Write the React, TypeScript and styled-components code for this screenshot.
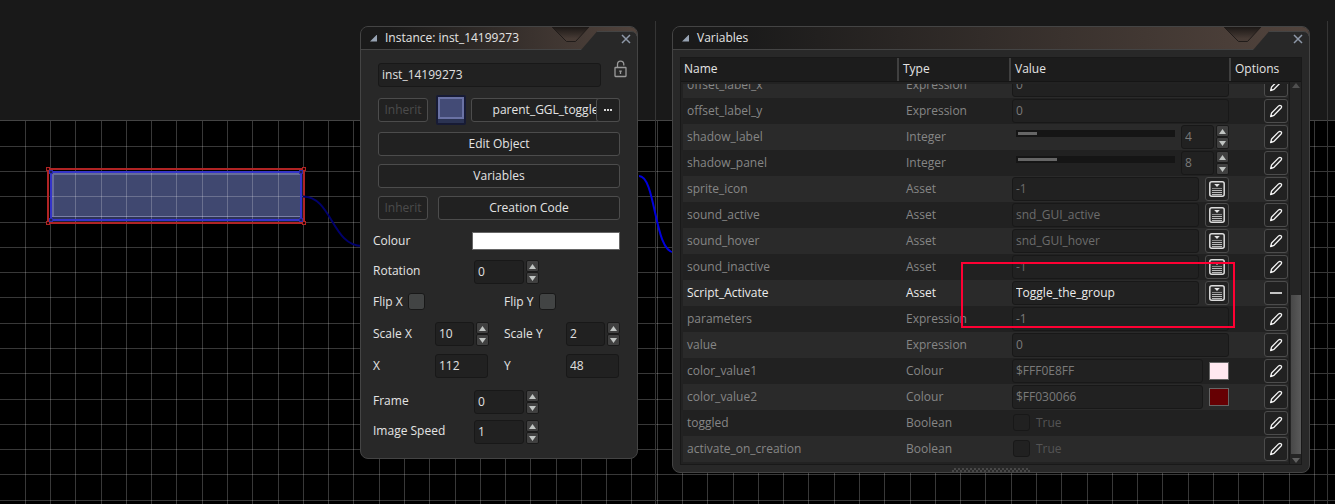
import React, { useLayoutEffect, useRef } from 'react';
import styled, { createGlobalStyle, css } from 'styled-components';

const GlobalStyle = createGlobalStyle`
  * { box-sizing: border-box; }
  body {
    margin: 0;
    background: #000;
    color: #e4e4e4;
    font: 12px/16px "Open Sans", sans-serif;
  }
  button, input {
    margin: 0;
    font: inherit;
    color: inherit;
  }
`;

/* ---------- room canvas ---------- */

const Workspace = styled.main`
  position: relative;
  min-height: 100vh;
  overflow: hidden;
  background: #000;
`;

const Canvas = styled.svg`
  position: absolute;
  inset: 0;
  width: 100%;
  height: 100%;
  display: block;
`;

const CELL = 25.28;
const columns = Array.from({ length: 110 }, (_, i) => Math.floor(25.25 + i * CELL));
const lines = Array.from({ length: 60 }, (_, i) => Math.floor(120.95 + i * CELL));

const handles = (x1: number, y1: number, x2: number, y2: number) => [
  [x1, y1],
  [x2, y1],
  [x1, y2],
  [x2, y2],
];

function RoomCanvas() {
  return (
    <Canvas aria-hidden="true">
      <rect x="0" y="0" width="100%" height="120" fill="#191919" />
      <rect x="50" y="171" width="253" height="51" fill="#1b1f38" />
      <rect x="52" y="173" width="249" height="46" fill="#2d3358" />
      <rect x="53" y="174" width="248" height="42" fill="#404870" />
      <path d="M53 217V174H301V217" fill="none" stroke="#666c99" strokeWidth="2" />
      <path d="M52 216.5H301" stroke="#7a80a6" />
      <g fill="#fff" fillOpacity="0.22">
        {columns.map((x) => (
          <rect key={x} x={x} y="121" width="1" height="100%" />
        ))}
        {lines.map((y) => (
          <rect key={y} x="0" y={y} width="100%" height="1" />
        ))}
      </g>
      <rect x="0" y="120" width="100%" height="1" fill="#444" />
      <rect x="655" y="21" width="1" height="100%" fill="#353535" />
      <rect x="1327" y="21" width="1" height="100%" fill="#353535" />
      <g fill="none">
        <rect x="48" y="169" width="256" height="54" stroke="#b02424" strokeWidth="2" />
        <rect x="51" y="172" width="250" height="48" stroke="#3434c8" strokeWidth="2" />
        {handles(46, 167, 302, 221).map(([x, y]) => (
          <rect key={`r${x}-${y}`} x={x + 0.5} y={y + 0.5} width="3" height="3" fill="#200" stroke="#b02424" />
        ))}
        {handles(49, 170, 299, 218).map(([x, y]) => (
          <rect key={`b${x}-${y}`} x={x + 0.5} y={y + 0.5} width="3" height="3" fill="#1b1f50" stroke="#2c2ca8" />
        ))}
        <path d="M303 196.500C332 196.500 332 246 362 246" stroke="#00006c" strokeWidth="2" />
        <path d="M639 176C656 176 654 252 674 252.500" stroke="#0000dc" strokeWidth="2" />
      </g>
    </Canvas>
  );
}

/* ---------- window chrome ---------- */

const Window = styled.section<{ $left: number; $width?: number; $right?: number }>`
  position: absolute;
  top: 26px;
  left: ${(p) => p.$left}px;
  ${(p) => (p.$width ? css`width: ${p.$width}px;` : css`right: ${p.$right}px;`)}
  background: #282828;
  border: 1px solid #444;
  border-radius: 8px;
`;

const TitleBar = styled.header`
  display: flex;
  align-items: center;
  height: 23px;
  padding-left: 9px;
  border-bottom: 1px solid #444;
  border-radius: 7px 7px 0 0;
  background: linear-gradient(90deg, #1a1a1a 10%, #52443d 100%);
`;

const Collapse = styled.button`
  width: 7px;
  height: 7px;
  padding: 0;
  border: 0;
  background: #97a3b3;
  clip-path: polygon(100% 0, 100% 100%, 0 100%);
`;

const Title = styled.h2`
  flex: 1;
  margin: 0 0 0 8px;
  font-size: 12px;
  font-weight: 400;
  line-height: 16px;
  white-space: nowrap;
`;

const TitleEnd = styled.div`
  position: relative;
  width: 87px;
  height: 23px;
  margin-top: 1px;
`;

const TitleArt = styled.svg`
  display: block;
`;

const Close = styled.button`
  position: absolute;
  top: 6px;
  right: 5px;
  display: grid;
  place-items: center;
  width: 12px;
  height: 12px;
  padding: 0;
  border: 0;
  background: none;
`;

function TitleRow({ id, children }: { id: string; children: React.ReactNode }) {
  return (
    <TitleBar>
      <Collapse aria-label="Collapse" />
      <Title>{children}</Title>
      <TitleEnd>
        <TitleArt width="87" height="23" viewBox="0 0 87 23" aria-hidden="true">
          <defs>
            <linearGradient id={id} x1="0" y1="0" x2="0" y2="1">
              <stop offset="0" stopColor="#1c1816" />
              <stop offset="0.8" stopColor="#473b35" />
            </linearGradient>
          </defs>
          <path d="M2 0L16.500 14.500H25.500L39 0Z" fill={`url(#${id})`} />
          <path d="M2 0L16.500 14.500H25.500L39 0" fill="none" stroke="#211c1a" />
          <path d="M31 23L47 4.500H81Q86.500 4.500 87 10V23Z" fill="#282828" />
          <path d="M47 4.500H81Q86 4.500 87 9" fill="none" stroke="#444" />
        </TitleArt>
        <Close aria-label="Close">
          <svg width="10" height="10" viewBox="0 0 10 10" fill="none" stroke="#8e98a8" strokeWidth="1.500">
            <path d="M1 1L9 9M9 1L1 9" />
          </svg>
        </Close>
      </TitleEnd>
    </TitleBar>
  );
}

/* ---------- shared controls ---------- */

const TextBox = styled.input<{ $w?: number; $tone?: string }>`
  ${(p) => (p.$w ? css`flex: none; width: ${p.$w}px;` : css`flex: 1; min-width: 0;`)}
  height: 24px;
  padding: 0 3px 1px;
  border: 1px solid #181818;
  border-radius: 3px;
  background: #212121;
  color: ${(p) => p.$tone ?? '#e0e0e0'};
  outline: none;
`;

const PushButton = styled.button<{ $w?: number }>`
  ${(p) => (p.$w ? css`flex: none; width: ${p.$w}px;` : css`flex: 1; min-width: 0;`)}
  display: flex;
  align-items: center;
  justify-content: center;
  height: 24px;
  padding: 0;
  border: 1px solid #4c4c4c;
  border-radius: 3px;
  background: #212121;
  white-space: nowrap;
  &:disabled { color: #4c4c4c; }
`;

const Stepper = styled.span`
  display: flex;
  flex-direction: column;
  flex: none;
  width: 13px;
  margin-left: 2px;
`;

const StepButton = styled.button`
  display: grid;
  place-items: center;
  height: 12px;
  padding: 0;
  border: 1px solid #1a1a1a;
  border-radius: 2px;
  background: #404040;
`;

function Steps({ of }: { of: string }) {
  return (
    <Stepper>
      <StepButton aria-label={`Increase ${of}`}>
        <svg width="7" height="5" viewBox="0 0 7 5"><path d="M3.500 0L7 5H0Z" fill="#c0c4c2" /></svg>
      </StepButton>
      <StepButton aria-label={`Decrease ${of}`}>
        <svg width="7" height="5" viewBox="0 0 7 5"><path d="M0 0H7L3.500 5Z" fill="#c0c4c2" /></svg>
      </StepButton>
    </Stepper>
  );
}

const Tick = styled.input<{ $dim?: boolean }>`
  appearance: none;
  flex: none;
  width: 17px;
  height: 17px;
  border: 1px solid #181818;
  border-radius: 3px;
  background: ${(p) => (p.$dim ? '#212121' : '#424444')};
`;

const ColourWell = styled.input<{ $w?: number }>`
  appearance: none;
  ${(p) => (p.$w ? css`flex: none; width: ${p.$w}px;` : css`flex: 1;`)}
  height: 18px;
  padding: 0;
  border: 1px solid #666;
  background: none;
  &::-webkit-color-swatch-wrapper { padding: 0; }
  &::-webkit-color-swatch { border: 0; border-radius: 0; }
`;

/* ---------- instance window ---------- */

const Actions = styled.div`
  padding: 13px 17px 12px;
`;

const Fields = styled.div`
  padding: 0 17px 14px 12px;
`;

const Row = styled.div<{ $before?: number }>`
  display: flex;
  align-items: center;
  margin-top: ${(p) => p.$before ?? 0}px;
`;

const Half = styled.div`
  display: flex;
  align-items: center;
  width: 131px;
  flex: none;
`;

const Label = styled.label<{ $w?: number; $raised?: boolean }>`
  flex: none;
  padding-bottom: ${(p) => (p.$raised ? 3 : 0)}px;
  ${(p) => p.$w && css`width: ${p.$w}px;`}
`;

const LockButton = styled.button`
  align-self: flex-start;
  margin: -3px -8px 0 12px;
  padding: 0;
  border: 0;
  background: none;
  svg { display: block; }
`;

const Sprite = styled.svg`
  flex: none;
  margin: -3px 5px -3px 8px;
`;

const ObjectPicker = styled.div`
  position: relative;
  display: flex;
  flex: 1;
`;

const MoreButton = styled(PushButton)`
  position: absolute;
  top: 0;
  right: 0;
  width: 24px;
`;

const Spacer = styled.span<{ $w: number }>`
  flex: none;
  width: ${(p) => p.$w}px;
`;

interface StepFieldProps { id: string; label: string; labelWidth: number; width: number; value: string; raised?: boolean }

function StepField({ id, label, labelWidth, width, value, raised }: StepFieldProps) {
  return (
    <>
      <Label htmlFor={id} $w={labelWidth} $raised={raised}>{label}</Label>
      <TextBox id={id} $w={width} defaultValue={value} />
      <Steps of={label} />
    </>
  );
}

function InstanceWindow() {
  return (
    <Window $left={360} $width={278} aria-label="Instance">
      <TitleRow id="notch-instance">Instance: inst_14199273</TitleRow>
      <Actions>
        <Row>
          <TextBox $w={223} aria-label="Instance name" defaultValue="inst_14199273" />
          <LockButton aria-label="Lock instance">
            <svg width="15" height="18" viewBox="0 0 15 18" fill="none" stroke="#9a9a9a" strokeWidth="1.300">
              <path d="M4.500 7.500V4.500Q4.500 1.200 7.500 1.200Q10.800 1.200 10.800 4.500V5.500" />
              <rect x="2" y="7.500" width="11" height="9" rx="0.500" />
              <path d="M7.500 10.500V14M6.200 11.200H8.800" />
            </svg>
          </LockButton>
        </Row>
        <Row $before={11}>
          <PushButton $w={50} disabled>Inherit</PushButton>
          <Sprite width="30" height="30" viewBox="0 0 30 30" aria-hidden="true">
            <rect width="30" height="30" rx="2" fill="#171b35" />
            <rect x="2" y="2" width="26" height="26" fill="#2b3352" />
            <rect x="3" y="3" width="24" height="20" fill="#434b76" stroke="#6a72a4" strokeWidth="2" />
          </Sprite>
          <ObjectPicker>
            <PushButton>parent_GGL_toggle</PushButton>
            <MoreButton aria-label="Choose object">
              <svg width="8" height="2" viewBox="0 0 8 2" fill="#d8d8d8">
                <path d="M0 0H2V2H0ZM3 0H5V2H3ZM6 0H8V2H6Z" />
              </svg>
            </MoreButton>
          </ObjectPicker>
        </Row>
        <Row $before={10}><PushButton>Edit Object</PushButton></Row>
        <Row $before={8}><PushButton>Variables</PushButton></Row>
        <Row $before={8}>
          <PushButton $w={50} disabled>Inherit</PushButton>
          <Spacer $w={10} />
          <PushButton>Creation Code</PushButton>
        </Row>
      </Actions>
      <Fields>
        <Row>
          <Label htmlFor="colour" $w={99}>Colour</Label>
          <ColourWell id="colour" type="color" defaultValue="#ffffff" />
        </Row>
        <Row $before={10}><StepField id="rotation" label="Rotation" labelWidth={101} width={50} value="0" raised /></Row>
        <Row $before={9}>
          <Half><Label htmlFor="flip-x" $w={35}>Flip X</Label><Tick id="flip-x" type="checkbox" /></Half>
          <Label htmlFor="flip-y" $w={35}>Flip Y</Label><Tick id="flip-y" type="checkbox" />
        </Row>
        <Row $before={12}>
          <Half><StepField id="scale-x" label="Scale X" labelWidth={62} width={39} value="10" /></Half>
          <StepField id="scale-y" label="Scale Y" labelWidth={62} width={39} value="2" />
        </Row>
        <Row $before={8}>
          <Half><Label htmlFor="pos-x" $w={62}>X</Label><TextBox id="pos-x" $w={53} defaultValue="112" /></Half>
          <Label htmlFor="pos-y" $w={62}>Y</Label><TextBox id="pos-y" $w={53} defaultValue="48" />
        </Row>
        <Row $before={12}><StepField id="frame" label="Frame" labelWidth={101} width={50} value="0" raised /></Row>
        <Row $before={6}><StepField id="speed" label="Image Speed" labelWidth={101} width={50} value="1" raised /></Row>
      </Fields>
    </Window>
  );
}

/* ---------- variables window ---------- */

type Kind = 'Expression' | 'Integer' | 'Asset' | 'Colour' | 'Boolean';
interface Variable { name: string; kind: Kind; value: string; edited?: boolean; swatch?: string }

const variables: Variable[] = [
  { name: 'offset_label_x', kind: 'Expression', value: '0' },
  { name: 'offset_label_y', kind: 'Expression', value: '0' },
  { name: 'shadow_label', kind: 'Integer', value: '4' },
  { name: 'shadow_panel', kind: 'Integer', value: '8' },
  { name: 'sprite_icon', kind: 'Asset', value: '-1' },
  { name: 'sound_active', kind: 'Asset', value: 'snd_GUI_active' },
  { name: 'sound_hover', kind: 'Asset', value: 'snd_GUI_hover' },
  { name: 'sound_inactive', kind: 'Asset', value: '-1' },
  { name: 'Script_Activate', kind: 'Asset', value: 'Toggle_the_group', edited: true },
  { name: 'parameters', kind: 'Expression', value: '-1' },
  { name: 'value', kind: 'Expression', value: '0' },
  { name: 'color_value1', kind: 'Colour', value: '$FFF0E8FF', swatch: '#ffe8f0' },
  { name: 'color_value2', kind: 'Colour', value: '$FF030066', swatch: '#660003' },
  { name: 'toggled', kind: 'Boolean', value: 'True' },
  { name: 'activate_on_creation', kind: 'Boolean', value: 'True' },
];

const TableFrame = styled.div`
  position: relative;
  display: flex;
  margin: 7px;
  border: 1px solid #191919;
  background: #222;
`;

const Table = styled.table`
  display: block;
  flex: 1;
  min-width: 0;
`;

const Head = styled.thead`
  display: block;
  width: calc(100% + 12px);
  border-bottom: 1px solid #151515;
  background: #1c1c1c;
`;

const HeadRow = styled.tr`
  display: grid;
  grid-template-columns: 1fr 112px 220px 72px;
  height: 23px;
`;

const HeadCell = styled.th`
  padding: 3px 0 0 4px;
  border-left: 2px solid #404040;
  font-weight: 400;
  text-align: left;
  &:first-child { padding-left: 3px; border-left: 0; }
`;

const Rows = styled.tbody`
  display: block;
  height: 378px;
  margin: 2px 1px 2px 2px;
  overflow: hidden;
`;

const VarRow = styled.tr<{ $edited?: boolean }>`
  display: grid;
  grid-template-columns: 1fr 106px 217px 59px;
  align-items: center;
  height: 26px;
  color: ${(p) => (p.$edited ? '#ececec' : '#868686')};
  &:nth-child(odd) { background: #2a2a2a; }
  &:nth-child(even) { background: #212121; }
`;

const TextCell = styled.td<{ $inset?: number }>`
  padding: 0 0 0 ${(p) => p.$inset ?? 0}px;
`;

const ControlCell = styled.td<{ $end?: boolean }>`
  display: flex;
  align-items: center;
  justify-content: ${(p) => (p.$end ? 'flex-end' : 'flex-start')};
  height: 24px;
  padding: 0;
`;

const Slider = styled.input<{ $fill: number }>`
  appearance: none;
  width: 159px;
  height: 7px;
  margin: 0 6px 7px 4px;
  background: linear-gradient(#666, #666) 2px 2px / ${(p) => p.$fill}px 3px no-repeat #151515;
  &::-webkit-slider-thumb { appearance: none; width: 1px; height: 7px; opacity: 0; }
`;

const TickLabel = styled.label`
  display: flex;
  align-items: center;
  gap: 6px;
  margin: 0 0 1px 1px;
  color: #545454;
`;

const ScrollBar = styled.div`
  display: flex;
  flex-direction: column;
  align-items: center;
  flex: none;
  width: 12px;
  margin-top: 24px;
  border-left: 1px solid #191919;
  background: #252525;
`;

const ScrollButton = styled.button<{ $edge: 'start' | 'end' }>`
  display: flex;
  justify-content: center;
  align-items: flex-${(p) => p.$edge};
  width: 10px;
  height: 10px;
  padding: 1px 0;
  border: 0;
  background: none;
`;

const ScrollTrack = styled.div`
  display: flex;
  flex-direction: column;
  justify-content: flex-end;
  flex: 1;
  width: 10px;
`;

const ScrollThumb = styled.div`
  height: 44%;
  background: linear-gradient(90deg, #484848, #5a5a5a);
`;

const Grip = styled.div`
  width: 78px;
  height: 4px;
  margin: -4px auto 0;
  background: repeating-conic-gradient(#484848 0 25%, transparent 0 50%) 0 0 / 4px 4px;
`;

const Highlight = styled.div`
  position: absolute;
  top: 204px;
  right: 66px;
  width: 274px;
  height: 66px;
  border: 2px solid #ff0033;
  pointer-events: none;
`;

const PencilIcon = () => (
  <svg width="14" height="14" viewBox="0 0 14 14" fill="none" stroke="#f4f4f4" strokeWidth="1.300" strokeLinejoin="round">
    <path d="M1.600 12.600L2.600 9L9.600 1.900Q10.800 0.900 12 1.700Q13.100 2.800 12.100 4L5 11.300Z" />
    <path d="M1.400 12.800L2.200 10.400L3.800 12Z" fill="#f4f4f4" stroke="none" />
  </svg>
);

const ListIcon = () => (
  <svg width="16" height="16" viewBox="0 0 16 16" fill="none" stroke="#dcdcdc">
    <rect x="0.800" y="0.800" width="14.400" height="14.400" rx="2" fill="#2c2c2c" strokeWidth="1.500" />
    <path d="M5.200 3H10.800L8 6Z" fill="#e4e4e4" stroke="none" />
    <path d="M3 7.500H13" stroke="#8a8a8a" />
    <path d="M3 9.500H13M3 11.500H13M3 13.500H13" stroke="#b8b8b8" />
  </svg>
);

const MinusIcon = () => (
  <svg width="12" height="2" viewBox="0 0 12 2"><rect width="12" height="2" fill="#c4c4c4" /></svg>
);

function ValueControl({ item }: { item: Variable }) {
  const tone = item.edited ? '#ececec' : item.kind === 'Asset' ? '#6c6c6c' : '#7a7a7a';
  if (item.kind === 'Boolean') {
    return <TickLabel><Tick type="checkbox" $dim />{item.value}</TickLabel>;
  }
  if (item.kind === 'Integer') {
    return (
      <>
        <Slider type="range" min="0" max="32" defaultValue={item.value} $fill={Number(item.value) * 5 - 1} aria-label={`${item.name} slider`} />
        <TextBox $w={33} $tone={tone} defaultValue={item.value} aria-label={item.name} />
        <Steps of={item.name} />
      </>
    );
  }
  return (
    <>
      <TextBox $tone={tone} defaultValue={item.value} aria-label={item.name} />
      {item.kind !== 'Expression' && <Spacer $w={6} />}
      {item.kind === 'Asset' && <PushButton $w={24} aria-label={`Choose asset for ${item.name}`}><ListIcon /></PushButton>}
      {item.kind === 'Colour' && <ColourWell type="color" $w={20} defaultValue={item.swatch} aria-label={`${item.name} colour`} />}
    </>
  );
}

function VariablesWindow() {
  const rows = useRef<HTMLTableSectionElement>(null);
  useLayoutEffect(() => {
    if (rows.current) rows.current.scrollTop = rows.current.scrollHeight;
  }, []);

  return (
    <Window $left={672} $right={25} aria-label="Variables">
      <TitleRow id="notch-variables">Variables</TitleRow>
      <TableFrame>
        <Table>
          <Head>
            <HeadRow>
              <HeadCell>Name</HeadCell>
              <HeadCell>Type</HeadCell>
              <HeadCell>Value</HeadCell>
              <HeadCell>Options</HeadCell>
            </HeadRow>
          </Head>
          <Rows ref={rows}>
            {variables.map((item) => (
              <VarRow key={item.name} $edited={item.edited}>
                <TextCell $inset={4}>{item.name}</TextCell>
                <TextCell>{item.kind}</TextCell>
                <ControlCell><ValueControl item={item} /></ControlCell>
                <ControlCell $end>
                  <PushButton $w={24} aria-label={item.edited ? `Reset ${item.name}` : `Edit ${item.name}`}>
                    {item.edited ? <MinusIcon /> : <PencilIcon />}
                  </PushButton>
                </ControlCell>
              </VarRow>
            ))}
          </Rows>
        </Table>
        <ScrollBar>
          <ScrollButton $edge="start" aria-label="Scroll up">
            <svg width="8" height="5" viewBox="0 0 8 5"><path d="M4 0L8 5H0Z" fill="#505050" /></svg>
          </ScrollButton>
          <ScrollTrack><ScrollThumb /></ScrollTrack>
          <ScrollButton $edge="end" aria-label="Scroll down">
            <svg width="8" height="5" viewBox="0 0 8 5"><path d="M0 0H8L4 5Z" fill="#606060" /></svg>
          </ScrollButton>
        </ScrollBar>
        <Highlight />
      </TableFrame>
      <Grip />
    </Window>
  );
}

export default function App() {
  return (
    <>
      <GlobalStyle />
      <Workspace>
        <RoomCanvas />
        <InstanceWindow />
        <VariablesWindow />
      </Workspace>
    </>
  );
}
